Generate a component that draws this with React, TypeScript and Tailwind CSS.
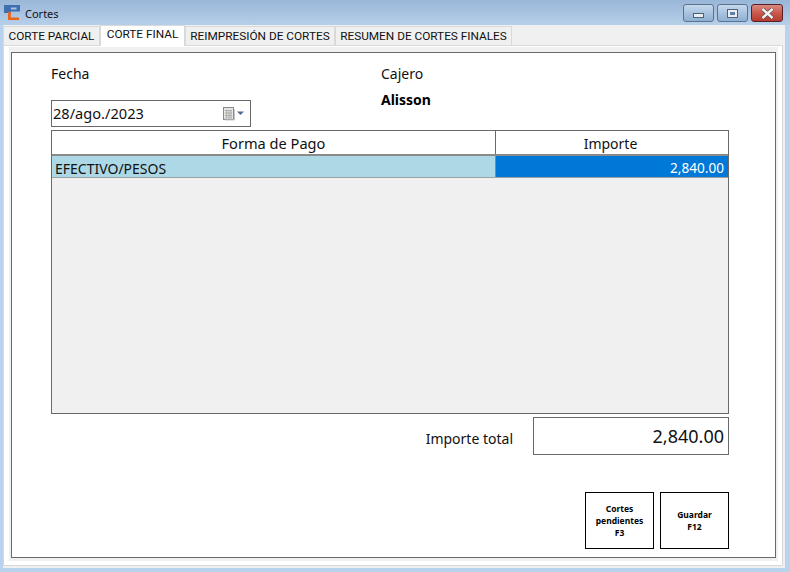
const tabs = [
  { name: 'CORTE PARCIAL', width: 'w-[97px]' },
  { name: 'CORTE FINAL', width: 'w-[85px]', isActive: true },
  { name: 'REIMPRESIÓN DE CORTES', width: 'w-[150px]' },
  { name: 'RESUMEN DE CORTES FINALES', width: 'w-[177px]' },
];

const AppLogo = () => (
  <svg width="17" height="17" viewBox="0 0 17 17" className="shrink-0">
    <path d="M0 1 H16 V7.500 H7 V9 H0 Z" fill="#3f6fb0" />
    <path d="M7 3.500 H12.500 V5.500 H7 Z" fill="#a9c4e4" />
    <path d="M4 16 H15 V13.500 H6.800 V8 H4 Z" fill="#e8641b" />
  </svg>
);

const CalendarIcon = () => (
  <svg width="24" height="14" viewBox="0 0 24 14">
    <rect x="0.500" y="0.500" width="10" height="12" fill="#e4e4e4" stroke="#8a8a8a" />
    <path d="M2 3.500H9M2 6H9M2 8.500H9M2 11H9M3.500 3V11M6 3V11M8 3V11" stroke="#a5a5a5" strokeWidth="0.800" />
    <path d="M11.500 2V13H2" fill="none" stroke="#c9c9c9" />
    <path d="M14 4.500H21L17.500 8Z" fill="#4a6a94" />
  </svg>
);

const CaptionButton = ({ kind }: { kind: 'min' | 'max' | 'close' }) => {
  const face =
    kind === 'close'
      ? 'w-[32px] border-[#5a1f24] bg-gradient-to-b from-[#d98a80] via-[#c9584c] to-[#b53a2e]'
      : 'w-[31px] border-[#5b7290] bg-gradient-to-b from-[#c6d9ee] via-[#a9c3df] to-[#8fb0d3]';
  return (
    <div className={`h-[18px] rounded-[3px] border flex items-center justify-center ${face}`}>
      {kind === 'min' && <div className="w-[11px] h-[5px] mt-[5px] bg-[#e9eef4] border border-[#4f6177]" />}
      {kind === 'max' && (
        <div className="w-[11px] h-[9px] bg-[#e9eef4] border border-[#4f6177] flex items-center justify-center">
          <div className="w-[5px] h-[3px] bg-[#5f7fa6]" />
        </div>
      )}
      {kind === 'close' && (
        <svg width="13" height="11" viewBox="0 0 13 11">
          <path d="M1.500 1L11.500 10M11.500 1L1.500 10" stroke="#3d3d3d" strokeWidth="3.600" />
          <path d="M1.500 1L11.500 10M11.500 1L1.500 10" stroke="#f3f3f3" strokeWidth="2.400" />
        </svg>
      )}
    </div>
  );
};

const ActionButton = ({ lines }: { lines: string[] }) => (
  <div className="w-[69px] h-[57px] border border-black bg-white flex flex-col items-center justify-center text-[8.5px] leading-[12px] font-bold text-black">
    {lines.map((line) => (
      <span key={line}>{line}</span>
    ))}
  </div>
);

export default function App() {
  return (
    <div className="w-[790px] h-[572px] overflow-hidden flex flex-col bg-[#b9d3ee] font-['Noto_Sans',sans-serif]">
      {/* Title bar */}
      <div className="h-[25px] shrink-0 flex items-start justify-between pl-[4px] pr-[7px] bg-gradient-to-b from-[#9ab6d8] to-[#b6cfe9]">
        <div className="flex items-center gap-[4px] h-[25px]">
          <AppLogo />
          <span className="text-[11px] text-[#111] pt-[3px]">Cortes</span>
        </div>
        <div className="flex gap-[3px] pt-[4px]">
          <CaptionButton kind="min" />
          <CaptionButton kind="max" />
          <CaptionButton kind="close" />
        </div>
      </div>

      {/* Client area */}
      <div className="w-[782px] h-[543px] ml-[3px] pr-[2px] bg-[#f0f0f0] flex flex-col">
        {/* Tabs */}
        <div className="h-[20px] shrink-0 flex items-end font-['Roboto',sans-serif] text-[11.800px] text-[#111]">
          {tabs.map((tab) => (
            <div
              key={tab.name}
              className={`flex items-center justify-center whitespace-nowrap border border-[#d9d9d9] border-b-0 ${tab.width} ${
                tab.isActive ? 'relative h-[21px] pb-[2px] bg-white -mb-px' : 'h-[19px] pt-[1px] bg-[#f0f0f0]'
              }`}
            >
              {tab.name}
            </div>
          ))}
        </div>

        {/* Tab page */}
        <div className="h-[521px] border border-[#d9d9d9] bg-white pt-[1px] pl-[5px]">
          <div className="w-[769px] h-[514px] bg-[#f0f0f0] pt-[5px] pl-[2px]">
            <div className="w-[765px] h-[506px] border border-[#696969] bg-white pl-[39px] pr-[46px] flex flex-col text-[14px] text-[#111]">
              {/* Fecha / Cajero */}
              <div className="h-[77px] shrink-0 flex">
                <div className="w-[330px] flex flex-col pt-[11px]">
                  <span className="h-[20px] leading-[20px]">Fecha</span>
                  <div className="mt-[16px] w-[200px] h-[27px] border border-[#696969] flex items-center justify-between pl-[1px] pr-[3px] text-[14.600px]">
                    <span>28/ago./2023</span>
                    <CalendarIcon />
                  </div>
                </div>
                <div className="flex flex-col pt-[11px]">
                  <span className="h-[20px] leading-[20px]">Cajero</span>
                  <span className="mt-[6px] h-[20px] leading-[20px] font-bold text-black">Alisson</span>
                </div>
              </div>

              {/* Grid */}
              <div className="h-[284px] shrink-0 border border-[#696969] bg-[#f0f0f0] flex flex-col">
                <div className="h-[25px] shrink-0 flex bg-white border-b-2 border-[#8a8a8a]">
                  <div className="w-[444px] flex items-center justify-center pt-[2px] border-r border-[#696969] text-[14.600px]">Forma de Pago</div>
                  <div className="flex-1 flex items-center justify-center pt-[2px] pr-[3px]">Importe</div>
                </div>
                <div className="h-[22px] shrink-0 flex border-b border-[#a0a0a0]">
                  <div className="w-[444px] flex items-center pl-[3px] pt-[3px] bg-[#add8e6] border-r border-[#8a8a8a]">EFECTIVO/PESOS</div>
                  <div className="flex-1 flex items-center justify-end pr-[4px] pt-[3px] bg-[#0078d7] text-white text-[13.600px]">2,840.00</div>
                </div>
              </div>

              {/* Total */}
              <div className="mt-[3px] h-[38px] shrink-0 flex items-center justify-end gap-[20px]">
                <span className="pt-[4px]">Importe total</span>
                <div className="w-[196px] h-[38px] border border-[#696969] flex items-center justify-end pr-[4px] text-[18px]">
                  2,840.00
                </div>
              </div>

              {/* Actions */}
              <div className="mt-[37px] flex justify-end gap-[6px]">
                <ActionButton lines={['Cortes', 'pendientes', 'F3']} />
                <ActionButton lines={['Guardar', 'F12']} />
              </div>
            </div>
          </div>
        </div>
      </div>
    </div>
  );
}
